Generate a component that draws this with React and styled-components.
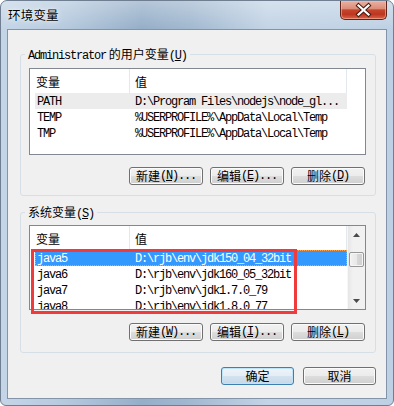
import React from 'react'
import styled, {createGlobalStyle} from 'styled-components'

const GlobalStyle = createGlobalStyle`
    html, body {
        margin: 0;
        padding: 0;
        background: #fff;
    }
    body {
        font-family: "Noto Sans CJK SC", "Liberation Sans", sans-serif;
        font-size: 12px;
        color: #000;
    }
`

const Window = styled.div`
    box-sizing: border-box;
    width: 394px;
    height: 406px;
    display: flex;
    flex-direction: column;
    padding: 0 6px 6px;
    border: 1px solid #6f7f91;
    border-radius: 7px 7px 6px 6px;
    overflow: hidden;
    background:
        linear-gradient(180deg, rgba(255, 255, 255, 0.3), rgba(255, 255, 255, 0) 28px),
        linear-gradient(90deg, #c4d5e7 0%, #b6cade 16%, #95aec8 36%, #a1b8cf 48%, #c3d4e6 68%, #bed1e4 100%);
`
const TitleBar = styled.div`
    display: flex;
    justify-content: space-between;
    align-items: flex-start;
    height: 28px;
    flex: none;
`
const Title = styled.div`
    margin: 7px 0 0 1px;
    font-size: 12.5px;
    line-height: 14px;
    letter-spacing: 0.2px;
    color: #000;
    text-shadow: 0 0 6px rgba(255, 255, 255, 0.95), 0 0 2px rgba(255, 255, 255, 0.8);
`
const CloseButton = styled.div`
    box-sizing: border-box;
    width: 47px;
    height: 19px;
    display: flex;
    border: 1px solid #5e2419;
    border-top: none;
    border-radius: 0 0 5px 5px;
    box-shadow: inset 0 0 0 1px rgba(255, 190, 170, 0.55);
    background: linear-gradient(180deg, #eab1a3 0%, #dc8d78 42%, #c5452c 50%, #bd3620 74%, #d9654b 100%);
`
const Client = styled.div`
    flex: 1;
    display: flex;
    flex-direction: column;
    box-sizing: border-box;
    border: 1px solid #8394a8;
    background: #f0f0f0;
`
const Group = styled.fieldset`
    margin: ${p => p.$top}px 10px 0 12px;
    padding: ${p => p.$padTop}px 9px ${p => p.$padBottom}px 8px;
    border: 1px solid #d5dfe5;
    border-radius: 3px;
    min-width: 0;
`
const Legend = styled.legend`
    margin-left: -4px;
    padding: 0 3px;
    height: 14px;
    line-height: 14px;
    font-size: 12px;
    white-space: nowrap;
`
const Mono = styled.span`
    font-family: "Liberation Mono", "DejaVu Sans Mono", monospace;
    font-size: 12px;
    letter-spacing: -1.2px;
    u {
        text-underline-offset: 1px;
    }
`
const ListView = styled.div`
    position: relative;
    box-sizing: border-box;
    height: ${p => p.$h}px;
    display: flex;
    border: 1px solid #828790;
    background: #fff;
`
const ListBody = styled.div`
    flex: 1;
    min-width: 0;
    overflow: hidden;
`
const Header = styled.div`
    display: flex;
    height: 24px;
    background: #fff;
`
const HeadCell = styled.div`
    box-sizing: border-box;
    width: ${p => p.$w}px;
    padding: 1px 0 0 ${p => p.$pad}px;
    border-right: 1px solid #e3e8ee;
    line-height: 23px;
    font-size: 12px;
    flex: none;
`
const HeadFill = styled.div`
    flex: 1;
`
const Row = styled.div`
    display: flex;
    width: 312px;
    height: 16px;
    margin-left: 5px;
    box-sizing: border-box;
    background: ${p => (p.$selected ? '#3399ff' : p.$inactive ? '#ececec' : 'transparent')};
    color: ${p => (p.$selected ? '#fff' : '#000')};
    outline: ${p => (p.$selected ? '1px dotted #ffa048' : 'none')};
    outline-offset: -1px;
`
const Cell = styled.div`
    box-sizing: border-box;
    width: ${p => p.$w}px;
    height: 16px;
    padding: 1px 0 0 ${p => p.$pad}px;
    line-height: 16px;
    white-space: nowrap;
    overflow: hidden;
    flex: none;
    font-family: "Liberation Mono", "DejaVu Sans Mono", monospace;
    font-size: 12px;
    letter-spacing: -1.2px;
`
const ScrollBar = styled.div`
    width: 17px;
    flex: none;
    display: flex;
    flex-direction: column;
    border-left: 1px solid #f7f7f7;
    background: linear-gradient(90deg, #e6e6e6 0%, #f1f1f1 30%, #f1f1f1 100%);
`
const ScrollArrow = styled.div`
    height: 17px;
    display: flex;
    align-items: center;
    justify-content: center;
    margin-top: ${p => (p.$down ? 'auto' : '0')};
`
const Thumb = styled.div`
    box-sizing: border-box;
    height: 15px;
    margin: 9px 1px 0 1px;
    border: 1px solid #979797;
    border-radius: 2px;
    box-shadow: inset 0 0 0 1px #f6f6f6;
    background: linear-gradient(90deg, #f2f2f2 0%, #e8e8e8 50%, #d8d8d8 51%, #cfcfcf 100%);
`
const Highlight = styled.div`
    position: absolute;
    left: 1px;
    top: 23px;
    width: 266px;
    height: 65px;
    box-sizing: border-box;
    border: 3px solid #ef3b3b;
    pointer-events: none;
`
const ButtonRow = styled.div`
    display: flex;
    justify-content: flex-end;
    gap: ${p => p.$gap || 7}px;
    margin: ${p => p.$top}px ${p => p.$right || 1}px 0 0;
`
const Button = styled.div`
    box-sizing: border-box;
    width: ${p => p.$w || 74}px;
    height: 18px;
    display: flex;
    align-items: center;
    justify-content: center;
    border: 1px solid ${p => (p.$default ? '#3c7fb1' : '#707070')};
    border-radius: 3px;
    box-shadow: inset 0 0 0 1px ${p => (p.$default ? '#bfe3f7' : '#fbfbfb')};
    background: ${p =>
        p.$default
            ? 'linear-gradient(180deg, #eef4f9 0%, #e4edf4 50%, #d3e2ee 51%, #c6d9e8 100%)'
            : 'linear-gradient(180deg, #f2f2f2 0%, #ebebeb 50%, #dddddd 51%, #cfcfcf 100%)'};
    font-size: 12px;
    line-height: 16px;
    white-space: nowrap;
`

const Key = ({children}) => (
    <Mono>
        (<u>{children}</u>)
    </Mono>
)

const Arrow = ({down}) => (
    <svg width="7" height="4" viewBox="0 0 7 4">
        <path d={down ? 'M0 0H7L3.5 4Z' : 'M3.5 0L7 4H0Z'} fill="#4a4a4a" />
    </svg>
)

const userVars = [
    ['PATH', 'D:\\Program Files\\nodejs\\node_gl...'],
    ['TEMP', '%USERPROFILE%\\AppData\\Local\\Temp'],
    ['TMP', '%USERPROFILE%\\AppData\\Local\\Temp'],
]

const sysVars = [
    ['java5', 'D:\\rjb\\env\\jdk150_04_32bit'],
    ['java6', 'D:\\rjb\\env\\jdk160_05_32bit'],
    ['java7', 'D:\\rjb\\env\\jdk1.7.0_79'],
    ['java8', 'D:\\rjb\\env\\jdk1.8.0_77'],
]

const ListHeader = () => (
    <Header>
        <HeadCell $w={100} $pad={6}>变量</HeadCell>
        <HeadCell $w={217} $pad={5}>值</HeadCell>
        <HeadFill />
    </Header>
)

export default function App() {
    return (
        <>
            <GlobalStyle />
            <Window>
                <TitleBar>
                    <Title>环境变量</Title>
                    <CloseButton>
                        <svg width="45" height="18" viewBox="0 0 45 18">
                            <path
                                d="M17.5 4.5L27.5 13.5M27.5 4.5L17.5 13.5"
                                stroke="#4a1a12"
                                strokeWidth="4.2"
                                strokeLinecap="square"
                            />
                            <path
                                d="M17.5 4.5L27.5 13.5M27.5 4.5L17.5 13.5"
                                stroke="#fff"
                                strokeWidth="2.2"
                                strokeLinecap="square"
                            />
                        </svg>
                    </CloseButton>
                </TitleBar>
                <Client>
                    <Group $top={17} $padTop={7} $padBottom={10}>
                        <Legend>
                            <Mono>Administrator</Mono> 的用户变量<Key>U</Key>
                        </Legend>
                        <ListView $h={87}>
                            <ListBody>
                                <ListHeader />
                                {userVars.map(([name, value], i) => (
                                    <Row key={name} $inactive={i === 0}>
                                        <Cell $w={95} $pad={2}>{name}</Cell>
                                        <Cell $w={217} $pad={5}>{value}</Cell>
                                    </Row>
                                ))}
                            </ListBody>
                        </ListView>
                        <ButtonRow $top={12}>
                            <Button>新建<Key>N</Key><Mono>...</Mono></Button>
                            <Button>编辑<Key>E</Key><Mono>...</Mono></Button>
                            <Button>删除<Key>D</Key></Button>
                        </ButtonRow>
                    </Group>
                    <Group $top={9} $padTop={6} $padBottom={11}>
                        <Legend>
                            系统变量<Key>S</Key>
                        </Legend>
                        <ListView $h={85}>
                            <ListBody>
                                <ListHeader />
                                {sysVars.map(([name, value], i) => (
                                    <Row key={name} $selected={i === 0}>
                                        <Cell $w={95} $pad={2}>{name}</Cell>
                                        <Cell $w={217} $pad={5}>{value}</Cell>
                                    </Row>
                                ))}
                            </ListBody>
                            <ScrollBar>
                                <ScrollArrow>
                                    <Arrow />
                                </ScrollArrow>
                                <Thumb />
                                <ScrollArrow $down>
                                    <Arrow down />
                                </ScrollArrow>
                            </ScrollBar>
                            <Highlight />
                        </ListView>
                        <ButtonRow $top={13}>
                            <Button>新建<Key>W</Key><Mono>...</Mono></Button>
                            <Button>编辑<Key>I</Key><Mono>...</Mono></Button>
                            <Button>删除<Key>L</Key></Button>
                        </ButtonRow>
                    </Group>
                    <ButtonRow $top={14} $right={10} $gap={9}>
                        <Button $w={73} $default>确定</Button>
                        <Button $w={73}>取消</Button>
                    </ButtonRow>
                </Client>
            </Window>
        </>
    )
}
